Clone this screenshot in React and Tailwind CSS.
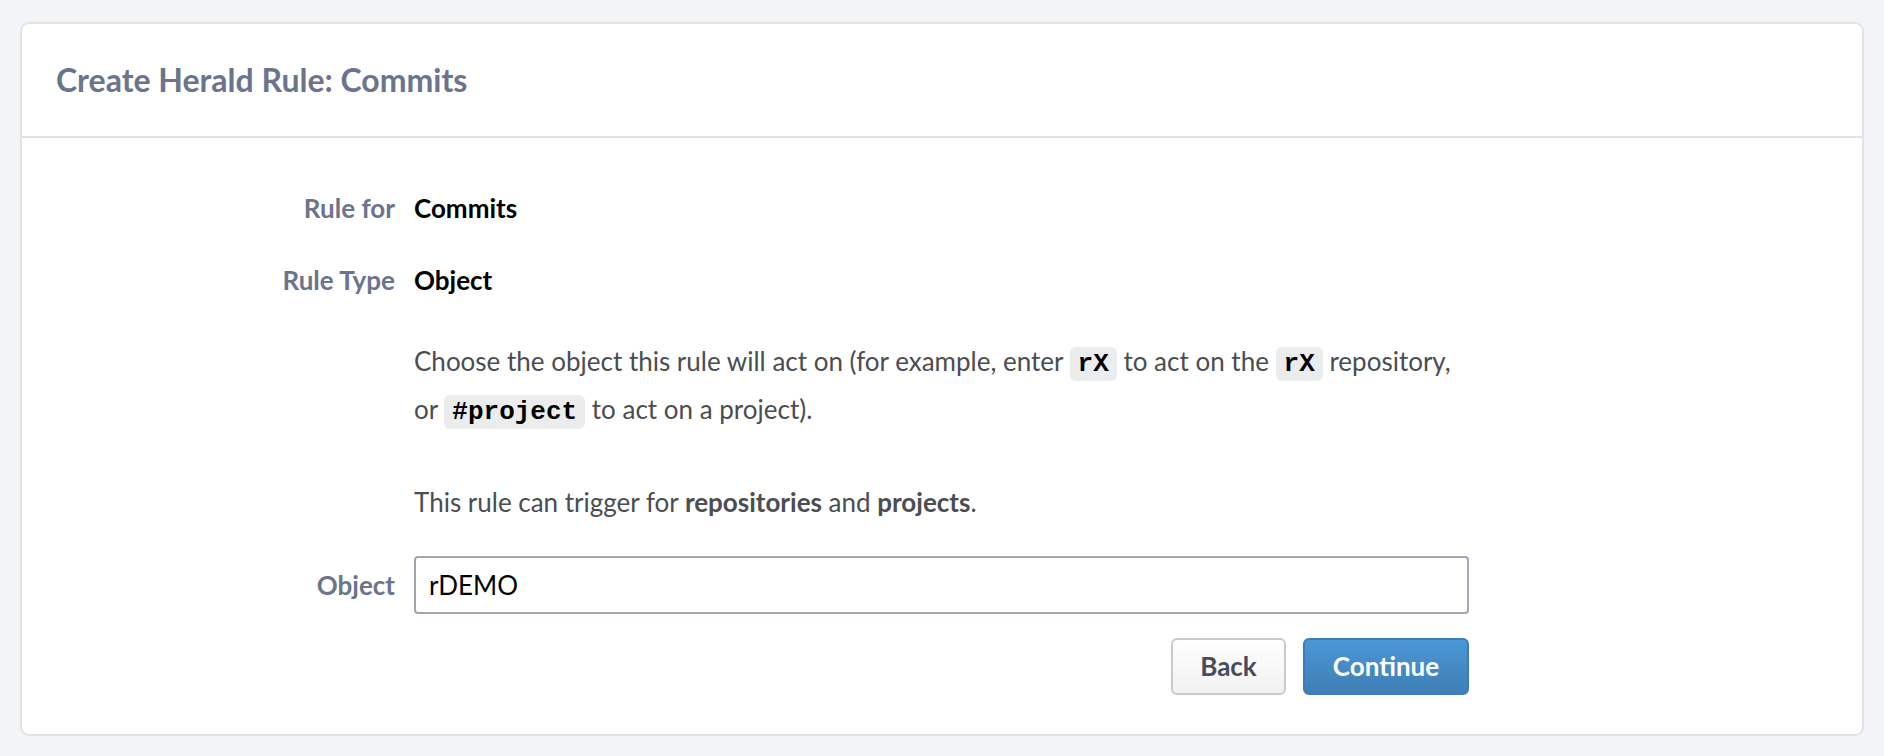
export default function App() {
  const code = "font-['Liberation_Mono',monospace] font-bold text-black bg-[#ebecee] rounded-[6px] px-[8px] py-[2px] text-[26px]";
  return (
    <div className="min-h-screen bg-[#f3f4f6] pt-[22px] px-[20px] pb-[19px] font-['Lato',sans-serif]">
      <div className="bg-white border-2 border-[#e3e4e7] rounded-[9px]">
        <div className="h-[114px] flex items-center px-[34px] border-b-2 border-[#e3e4e7]">
          <h1 className="text-[32px] font-bold text-[#6b748c] leading-none">Create Herald Rule: Commits</h1>
        </div>
        <div className="pt-[50px] pb-[39px]">
          <div className="flex items-center h-[40px]">
            <div className="w-[373px] text-right text-[26px] font-bold text-[#6b748c]">Rule for</div>
            <div className="pl-[19px] text-[26px] font-bold text-black">Commits</div>
          </div>
          <div className="flex items-center h-[40px] mt-[32px]">
            <div className="w-[373px] text-right text-[26px] font-bold text-[#6b748c]">Rule Type</div>
            <div className="pl-[19px] text-[26px] font-bold text-black">Object</div>
          </div>
          <div className="ml-[392px] w-[1070px] text-[26px] text-[#4b4d51] mt-[39px] leading-[45px] whitespace-nowrap">
            <p>
              Choose the object this rule will act on (for example, enter <span className={code}>rX</span> to act on the <span className={code}>rX</span> repository,<br />
              or <span className={code}>#project</span> to act on a project).
            </p>
            <p className="mt-[45px]">
              This rule can trigger for <b>repositories</b> and <b>projects</b>.
            </p>
          </div>
          <div className="flex items-center mt-[31px]">
            <div className="w-[373px] text-right text-[26px] font-bold text-[#6b748c]">Object</div>
            <div className="pl-[19px]">
              <input
                defaultValue="rDEMO"
                className="w-[1055px] h-[58px] border-2 border-[#a1a6b0] rounded-[4px] px-[13px] text-[26px] text-black outline-none font-['Lato',sans-serif]"
              />
            </div>
          </div>
          <div className="flex justify-end gap-[17px] ml-[392px] w-[1055px] mt-[24px]">
            <button className="h-[57px] w-[115px] border-2 border-[#c7cad1] rounded-[6px] bg-gradient-to-b from-[#ffffff] to-[#f1f1f2] text-[26px] font-bold text-[#464c5c]">Back</button>
            <button className="h-[57px] w-[166px] border-2 border-[#3b7dbb] rounded-[6px] bg-gradient-to-b from-[#4b97d7] to-[#3f7fb5] text-[26px] font-bold text-white">Continue</button>
          </div>
        </div>
      </div>
    </div>
  );
}
